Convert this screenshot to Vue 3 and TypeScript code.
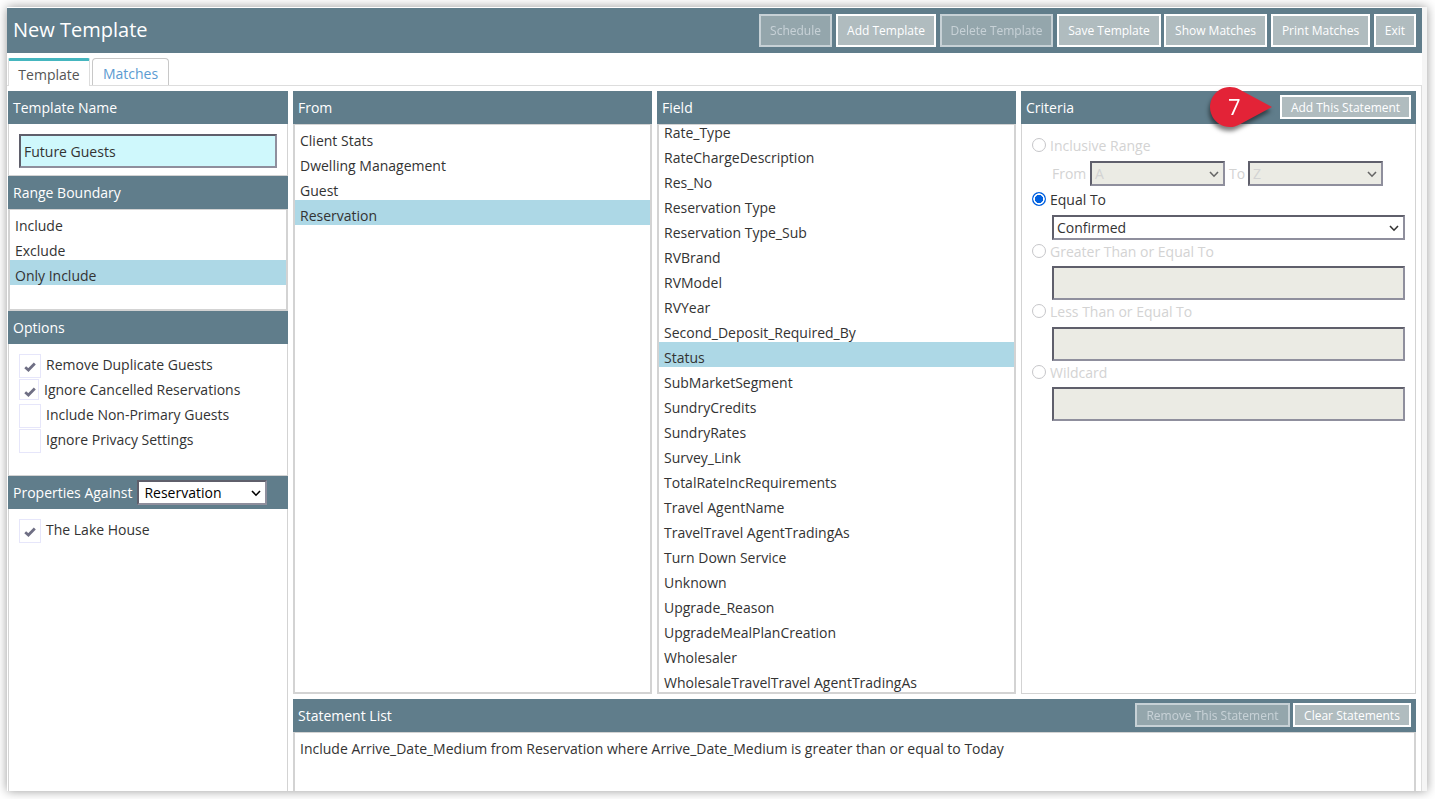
<script setup lang="ts">
interface Action { label: string; disabled?: boolean }
const actions: Action[] = [
  { label: 'Schedule', disabled: true },
  { label: 'Add Template' },
  { label: 'Delete Template', disabled: true },
  { label: 'Save Template' },
  { label: 'Show Matches' },
  { label: 'Print Matches' },
  { label: 'Exit' },
]
const boundaries: string[] = ['Include', 'Exclude', 'Only Include']
const options = [
  { label: 'Remove Duplicate Guests', on: true, small: false },
  { label: 'Ignore Cancelled Reservations', on: true, small: true },
  { label: 'Include Non-Primary Guests', on: false, small: false },
  { label: 'Ignore Privacy Settings', on: false, small: false },
]
const sources: string[] = ['Client Stats', 'Dwelling Management', 'Guest', 'Reservation']
const fields: string[] = [
  'Rate_Type', 'RateChargeDescription', 'Res_No', 'Reservation Type', 'Reservation Type_Sub',
  'RVBrand', 'RVModel', 'RVYear', 'Second_Deposit_Required_By', 'Status', 'SubMarketSegment',
  'SundryCredits', 'SundryRates', 'Survey_Link', 'TotalRateIncRequirements', 'Travel AgentName',
  'TravelTravel AgentTradingAs', 'Turn Down Service', 'Unknown', 'Upgrade_Reason',
  'UpgradeMealPlanCreation', 'Wholesaler', 'WholesaleTravelTravel AgentTradingAs',
]
</script>

<template>
  <div class="page">
    <div class="window">
      <header class="titlebar">
        <h1>New Template</h1>
        <div class="actions">
          <button v-for="a in actions" :key="a.label" class="btn" :class="{ off: a.disabled }">{{ a.label }}</button>
        </div>
      </header>
      <nav class="tabs">
        <div class="tab active">Template</div>
        <div class="tab">Matches</div>
      </nav>
      <main class="content">
        <aside class="left">
          <div class="bar">Template Name</div>
          <div class="box name-box"><div class="field name">Future Guests</div></div>
          <div class="bar">Range Boundary</div>
          <div class="list range">
            <div v-for="b in boundaries" :key="b" class="row" :class="{ sel: b === 'Only Include' }">{{ b }}</div>
          </div>
          <div class="bar">Options</div>
          <div class="box options">
            <div v-for="o in options" :key="o.label" class="check" :class="{ small: o.small }">
              <span class="cb"><svg v-if="o.on" width="12" height="10" viewBox="0 0 12 10"><path d="M1.2 5.3 4.4 8 10.8 1.6" /></svg></span>
              <span>{{ o.label }}</span>
            </div>
          </div>
          <div class="bar">
            <span>Properties Against</span>
            <div class="field select prop">Reservation<svg class="chev" width="10" height="7" viewBox="0 0 10 7"><path d="M1 1 5 5.2 9 1" /></svg></div>
          </div>
          <div class="box props">
            <div class="check">
              <span class="cb"><svg width="12" height="10" viewBox="0 0 12 10"><path d="M1.2 5.3 4.4 8 10.8 1.6" /></svg></span>
              <span>The Lake House</span>
            </div>
          </div>
        </aside>
        <div class="right">
          <div class="columns">
            <section class="col">
              <div class="bar">From</div>
              <div class="list">
                <div v-for="s in sources" :key="s" class="row" :class="{ sel: s === 'Reservation' }">{{ s }}</div>
              </div>
            </section>
            <section class="col">
              <div class="bar">Field</div>
              <div class="list">
                <div class="scrolled">
                  <div v-for="f in fields" :key="f" class="row" :class="{ sel: f === 'Status' }">{{ f }}</div>
                </div>
              </div>
            </section>
            <section class="col">
              <div class="bar criteria-bar">
                <span>Criteria</span>
                <button class="btn slim add">Add This Statement</button>
                <svg class="pin" width="86" height="62" viewBox="0 0 86 62">
                  <path d="M74 27 41.5 9.4A20 20 0 1 0 41.5 44.6Z" />
                  <text x="36.3" y="35" text-anchor="middle">7</text>
                </svg>
              </div>
              <div class="box criteria">
                <div class="radio dim"><i></i>Inclusive Range</div>
                <div class="span dim">
                  <span>From</span>
                  <div class="field select dis">A<svg class="chev" width="10" height="7" viewBox="0 0 10 7"><path d="M1 1 5 5.2 9 1" /></svg></div>
                  <span>To</span>
                  <div class="field select dis">Z<svg class="chev" width="10" height="7" viewBox="0 0 10 7"><path d="M1 1 5 5.2 9 1" /></svg></div>
                </div>
                <div class="radio eq"><i class="on"></i>Equal To</div>
                <div class="field select wide">Confirmed<svg class="chev" width="10" height="7" viewBox="0 0 10 7"><path d="M1 1 5 5.2 9 1" /></svg></div>
                <div class="radio dim next"><i></i>Greater Than or Equal To</div>
                <div class="field dis wide"></div>
                <div class="radio dim next"><i></i>Less Than or Equal To</div>
                <div class="field dis wide lower"></div>
                <div class="radio dim next"><i></i>Wildcard</div>
                <div class="field dis wide"></div>
              </div>
            </section>
          </div>
          <div class="bar">
            <span>Statement List</span>
            <div class="bar-actions">
              <button class="btn slim off remove">Remove This Statement</button>
              <button class="btn slim clear">Clear Statements</button>
            </div>
          </div>
          <div class="list statements">
            <div class="row">Include Arrive_Date_Medium from Reservation where Arrive_Date_Medium is greater than or equal to Today</div>
          </div>
        </div>
      </main>
    </div>
  </div>
</template>

<style>
html, body { background: #fff; overflow: hidden; }
</style>

<style scoped>
* { box-sizing: border-box; }
.page {
  width: 1435px; height: 799px; padding: 7px 8px 8px 7px; overflow: hidden;
  font: 14px/19px "Open Sans", sans-serif; color: #333; background: #fff;
}
.window {
  width: 1420px; height: 784px; padding: 1px 5px 0 0; display: flex; flex-direction: column;
  overflow: hidden; background: linear-gradient(to left, #f5f5f5 5px, #fff 5px);
  box-shadow: 0 0 10px rgba(0, 0, 0, .4);
}
.titlebar {
  height: 45px; flex: none; padding: 0 6px; background: #607d8b; color: #fff;
  display: flex; justify-content: space-between; align-items: center;
}
h1 { margin: 0; padding-bottom: 2px; font-size: 20px; line-height: 28px; font-weight: 400; }
.actions { display: grid; grid-template-columns: 73px 100px 113px 104px 102px 99px 42px; column-gap: 4px; }
.btn {
  height: 33px; padding: 0; border: 2px solid #fff; background: #b0bcbf; color: #fff;
  font: 12px/17px "Open Sans", sans-serif; text-align: center; white-space: nowrap;
}
.actions .btn:nth-child(5) { margin-left: -1px; }
.btn.off { opacity: .65; }
.slim { height: 24px; }
.add { width: 131px; }
.remove { width: 155px; }
.clear { width: 118px; }
.tabs { height: 33px; flex: none; display: flex; align-items: flex-end; padding-left: 1px; border-bottom: 1px solid #ddd; }
.tab {
  width: 77px; height: 27px; margin-left: 2px; padding-top: 5px; text-align: center; color: #5b9bd1;
  border: 1px solid #c8c8c8; border-bottom: 0; border-radius: 4px 4px 0 0;
}
.tab.active {
  width: 82px; height: 28px; margin: 0 0 -1px; background: #fff; color: #555;
  border-color: #ddd; border-top: 3px solid #45b6bf; padding-top: 4px; border-radius: 2px 2px 0 0;
}
.content { flex: 1; min-height: 0; display: flex; gap: 5px; margin-left: 1px; padding: 5px 5px 0 0; border-right: 1px solid #ddd; }
.left { width: 280px; flex: none; display: flex; flex-direction: column; }
.right { flex: 1; min-width: 0; display: flex; flex-direction: column; }
.bar {
  height: 33px; flex: none; display: flex; align-items: center; justify-content: space-between;
  padding: 0 5px; background: #607d8b; color: #fff;
}
.left .bar { justify-content: flex-start; gap: 5px; }
.bar-actions { display: flex; gap: 3px; margin-bottom: 1px; }
.box { border: 1px solid #d3d3d3; border-top: 0; background: #fff; }
.list { border: 2px solid #d3d3d3; border-top-width: 1px; background: #fff; overflow: hidden; }
.row { height: 25px; padding: 6px 5px 0; white-space: nowrap; }
.sel { background: #add8e6; }
.name-box { height: 52px; padding: 10px; }
.range { height: 102px; }
.options { height: 132px; padding: 10px; }
.props { flex: 1; border-bottom: 0; padding: 10px; }
.field { border: 2px solid; border-color: #5f5f6b #8f8f9d #8f8f9d #5f5f6b; background: #fff; }
.name { height: 34px; padding: 6px 3px; background: #cff8fc; }
.select { position: relative; height: 25px; padding: 1px 3px; }
.chev { position: absolute; right: 4px; top: 8px; fill: none; stroke: currentColor; stroke-width: 1.6; }
.prop { width: 129.4px; padding-left: 5px; color: #000; }
.check { height: 25px; display: flex; gap: 5px; line-height: 22px; }
.cb { width: 22px; height: 24px; border: 1px solid #e6e6fa; padding: 7px 0 0 4px; line-height: 0; }
.small .cb { width: 20px; height: 21px; }
.cb svg { fill: none; stroke: #6f6f84; stroke-width: 2.8; }
.columns { height: 603px; flex: none; display: grid; grid-template-columns: 359px 359px 395px; gap: 5px; margin-bottom: 5px; }
.col { display: flex; flex-direction: column; min-width: 0; }
.col .list, .criteria { flex: 1; min-height: 0; }
.scrolled { margin-top: -8px; }
.criteria-bar { position: relative; }
.criteria-bar .add { margin-bottom: 1px; }
.pin { position: absolute; left: 177px; top: -11px; overflow: visible; filter: drop-shadow(-1px 4px 2px rgba(0, 0, 0, .5)); }
.pin path { fill: #e32337; }
.pin text { fill: #fff; font-size: 22px; }
.criteria { padding: 12px 10px 0; }
.radio { height: 19px; display: flex; gap: 4px; }
.radio i { width: 14px; height: 14px; margin-top: 2px; border: 1px solid #c6c6c9; border-radius: 50%; }
.radio i.on { border: 0; background: radial-gradient(circle, #0060df 3.9px, #fff 4.4px, #fff 5.4px, #0060df 5.9px); }
.dim { color: #d3d3d3; }
.span { display: grid; grid-template-columns: 38px 135px 23px 135px; margin: 6px 0 4px 20px; align-items: center; }
.span > span:nth-of-type(2) { padding-left: 4px; }
.dis { background: #ebebe4; }
.dis .chev { color: #666; }
.wide { width: 353px; height: 34px; margin: 5px 0 0 20px; }
.select.wide { height: 25px; margin-top: 6px; }
.next { margin-top: 2px; }
.lower { margin-top: 6px; }
.statements { flex: 1; border-bottom: 0; min-height: 0; }
</style>
